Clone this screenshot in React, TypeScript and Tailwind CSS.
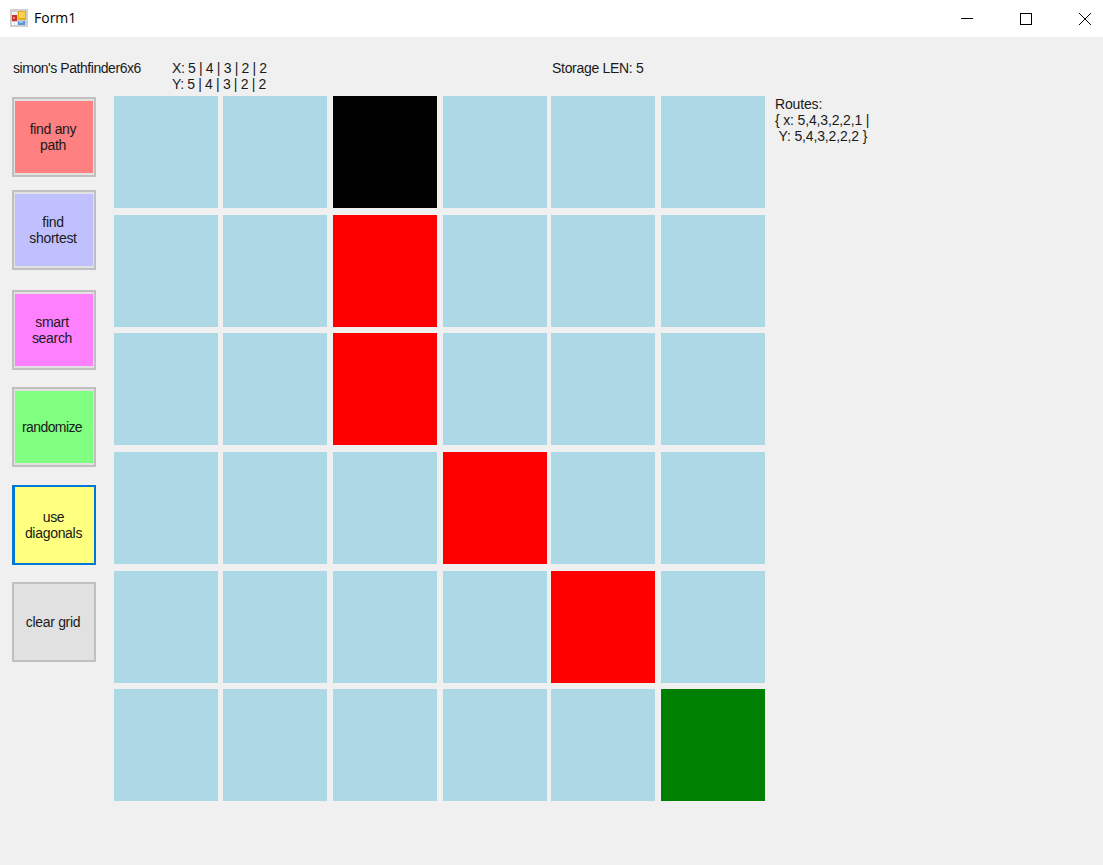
const colTracks = "grid-cols-[109px_110px_110px_108px_110px_104px]";

const cellColors: Record<string, string> = {
  "0,2": "bg-[#000000]",
  "1,2": "bg-[#ff0000]",
  "2,2": "bg-[#ff0000]",
  "3,3": "bg-[#ff0000]",
  "4,4": "bg-[#ff0000]",
  "5,5": "bg-[#008000]",
};

const buttons = [
  { label: "find any path", fill: "bg-[#ff8080]", mt: "mt-0", text: "w-[60px] -translate-x-px" },
  { label: "find shortest", fill: "bg-[#c0c0ff]", mt: "mt-[13px]", text: "w-[60px] -translate-x-px" },
  { label: "smart search", fill: "bg-[#ff80ff]", mt: "mt-[20px]", text: "w-[50px] -translate-x-[2px]" },
  { label: "randomize", fill: "bg-[#80ff80]", mt: "mt-[17px]", text: "w-[70px] -translate-x-[2px] tracking-[-0.6px]" },
  { label: "use diagonals", fill: "bg-[#ffff80]", mt: "mt-[18px]", text: "w-[70px] -translate-x-px", focus: true },
  { label: "clear grid", fill: "bg-[#e1e1e1]", mt: "mt-[17px]", text: "w-[70px] -translate-x-px", plain: true },
];

function AppIcon() {
  return (
    <svg width="18" height="18" viewBox="0 0 18 18" className="block">
      <rect x="0" y="0" width="18" height="18" fill="#cfcfcf" />
      <rect x="2" y="3" width="5" height="3" fill="#f4f4f4" />
      <rect x="2" y="6" width="5" height="6" fill="#c8312b" />
      <rect x="3" y="8" width="2" height="2" fill="#e88a80" />
      <rect x="2" y="13" width="2" height="3" fill="#ffffff" />
      <rect x="5" y="13" width="2" height="3" fill="#ffffff" />
      <rect x="8" y="2" width="8" height="9" fill="#e8ab1c" />
      <rect x="9" y="3" width="6" height="6" fill="#fbd24e" />
      <rect x="8" y="12" width="7" height="4" fill="#5b93dc" />
      <rect x="9" y="12" width="4" height="2" fill="#9cc2ee" />
    </svg>
  );
}

export default function App() {
  const rows = [0, 1, 2, 3, 4, 5];
  return (
    <div
      className="w-[1103px] h-[865px] overflow-hidden bg-[#f0f0f0] text-[14px] leading-[16px] text-[#1a1a1a] tracking-[-0.3px]"
      style={{ fontFamily: '"Liberation Sans", Arial, sans-serif' }}
    >
      <div className="h-[37px] bg-white flex items-center tracking-normal">
        <div className="ml-[10px] -mt-[2px]">
          <AppIcon />
        </div>
        <span
          className="ml-[6px] -mt-[1px] text-[14px] text-black"
          style={{ fontFamily: '"Open Sans", sans-serif' }}
        >
          Form1
        </span>
        <div className="ml-auto mr-[12px] flex items-center gap-[47px]">
          <svg width="12" height="12" viewBox="0 0 12 12" className="block"><path d="M0 5.5H12" stroke="#000" strokeWidth="1" /></svg>
          <svg width="12" height="12" viewBox="0 0 12 12" className="block"><rect x="0.5" y="0.5" width="11" height="11" fill="none" stroke="#000" strokeWidth="1" /></svg>
          <svg width="12" height="12" viewBox="0 0 12 12" className="block"><path d="M0 0L12 12M12 0L0 12" stroke="#000" strokeWidth="1" /></svg>
        </div>
      </div>

      <div className="h-[59px] flex pt-[23px]">
        <div className="ml-[13px] w-[159px] tracking-[-0.45px]">simon's Pathfinder6x6</div>
        <div className="w-[380px] tracking-[-0.35px]">
          <div>X: 5 | 4 | 3 | 2 | 2</div>
          <div>Y: 5 | 4 | 3 | 2 | 2</div>
        </div>
        <div>Storage LEN: 5</div>
      </div>

      <div className="flex items-start">
        <div className="ml-[12px] w-[84px] mt-[1px] flex flex-col">
          {buttons.map((b) => (
            <div
              key={b.label}
              className={`${b.mt} h-[80px] flex items-center justify-center ${
                b.focus
                  ? "border-[2px] border-l-[3px] border-[#0078d7]"
                  : b.plain
                    ? "border-[2px] border-[#c0c0c0] bg-[#e1e1e1]"
                    : "border-[2px] border-[#c0c0c0] bg-[#e1e1e1] px-px py-[2px]"
              }`}
            >
              <div className={`w-full h-full ${b.fill} flex items-center justify-center text-center`}>
                <span className={`${b.text} block`}>{b.label}</span>
              </div>
            </div>
          ))}
        </div>

        <div className={`ml-[18px] w-[651px] grid ${colTracks} grid-rows-[119px_118px_119px_119px_118px_112px]`}>
          {rows.flatMap((r) =>
            rows.map((c) => (
              <div
                key={`${r}-${c}`}
                className={`w-[104px] h-[112px] ${cellColors[`${r},${c}`] ?? "bg-[#add8e6]"}`}
              />
            ))
          )}
        </div>

        <div className="ml-[10px] whitespace-pre tracking-[-0.15px]">
          <div>Routes:</div>
          <div>{"{ x: 5,4,3,2,2,1 |"}</div>
          <div>{" Y: 5,4,3,2,2,2 }"}</div>
        </div>
      </div>
    </div>
  );
}
